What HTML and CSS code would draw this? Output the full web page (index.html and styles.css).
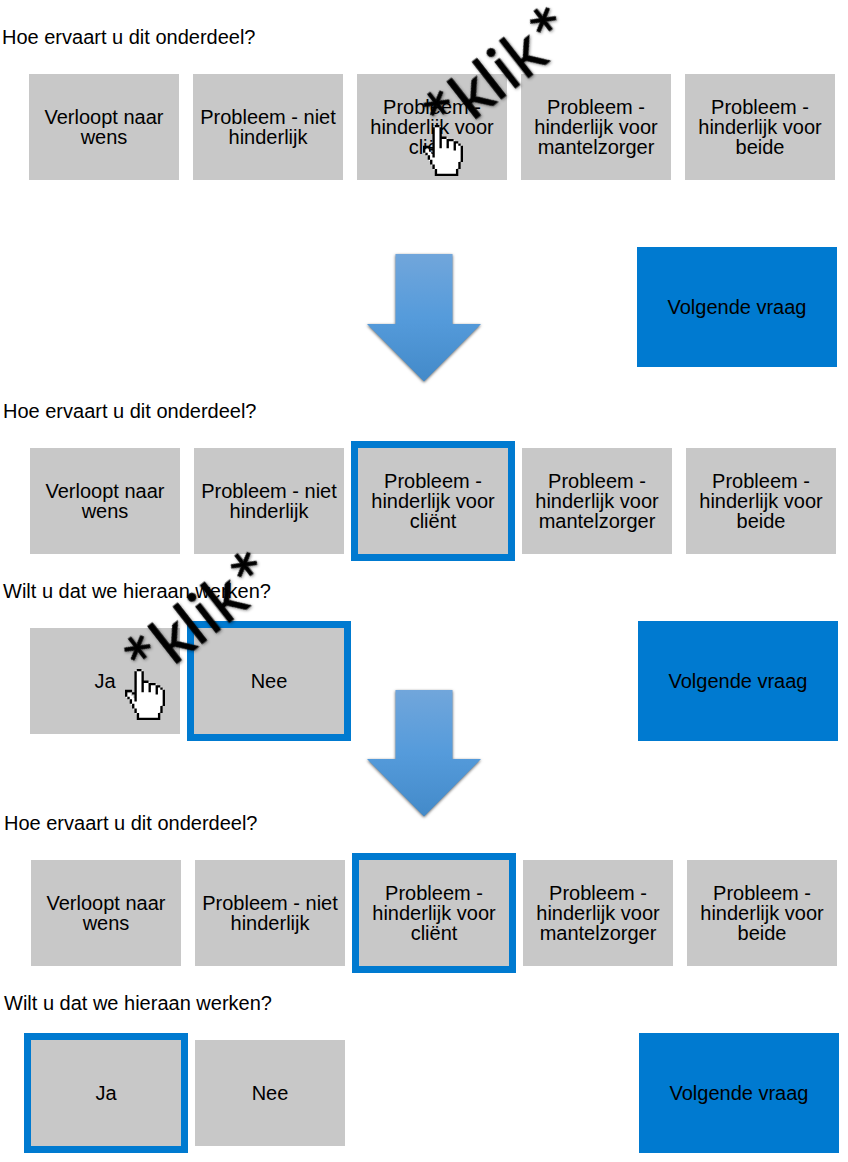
FILE: index.html
```html
<!DOCTYPE html>
<html lang="nl">
<head>
<meta charset="utf-8">
<title>Vragenlijst</title>
<link rel="stylesheet" href="styles.css">
</head>
<body>
<svg class="defs" width="0" height="0" aria-hidden="true">
  <defs>
    <linearGradient id="arrow-fill" x1="0" y1="0" x2="0" y2="1">
      <stop offset="0" stop-color="#71a6db"/>
      <stop offset="0.5" stop-color="#559bdb"/>
      <stop offset="1" stop-color="#438ac9"/>
    </linearGradient>
    <symbol id="hand" viewBox="0 0 17 22" preserveAspectRatio="none">
      <path fill="#fff" d="M4.500 0.500h3v5h3v1h3v1h2v1h1v7h-1v3h-1v3H5.500v-2h-1v-2h-1v-2h-1v-2h-1v-1h-1v-2h2v1h1v1h1z"/>
      <path fill="#000" d="M5 0h2v1H5zM4 1h1v13H4zM7 1h1v9H7zM8 5h2v1H8zM10 6h3v1h-3zM10 7h1v3h-1zM13 7h2v1h-2zM13 8h1v3h-1zM15 8h1v1h-1zM16 9h1v7h-1zM0 9h3v1H0zM0 10h1v2H0zM3 10h1v1H3zM1 12h1v1H1zM2 13h1v2H2zM3 15h1v2H3zM4 17h1v2H4zM5 19h1v3H5zM15 16h1v3h-1zM14 19h1v3h-1zM6 21h8v1H6z"/>
    </symbol>
  </defs>
</svg>
<main class="flow">
  <section class="step step-1">
    <h2 class="question">Hoe ervaart u dit onderdeel?</h2>
    <div class="options">
      <div class="option">Verloopt naar wens</div>
      <div class="option">Probleem - niet hinderlijk</div>
      <div class="option">Probleem - hinderlijk voor cliënt</div>
      <div class="option">Probleem - hinderlijk voor mantelzorger</div>
      <div class="option">Probleem - hinderlijk voor beide</div>
    </div>
    <div class="followup"></div>
    <div class="bottom">
      <div class="next">Volgende vraag</div>
    </div>
  </section>

  <section class="step step-2">
    <h2 class="question">Hoe ervaart u dit onderdeel?</h2>
    <div class="options">
      <div class="option">Verloopt naar wens</div>
      <div class="option">Probleem - niet hinderlijk</div>
      <div class="option selected">Probleem - hinderlijk voor cliënt</div>
      <div class="option">Probleem - hinderlijk voor mantelzorger</div>
      <div class="option">Probleem - hinderlijk voor beide</div>
    </div>
    <div class="followup"><h2 class="question">Wilt u dat we hieraan werken?</h2></div>
    <div class="bottom">
      <div class="option">Ja</div>
      <div class="option selected">Nee</div>
      <div class="next">Volgende vraag</div>
    </div>
  </section>

  <section class="step step-3">
    <h2 class="question">Hoe ervaart u dit onderdeel?</h2>
    <div class="options">
      <div class="option">Verloopt naar wens</div>
      <div class="option">Probleem - niet hinderlijk</div>
      <div class="option selected">Probleem - hinderlijk voor cliënt</div>
      <div class="option">Probleem - hinderlijk voor mantelzorger</div>
      <div class="option">Probleem - hinderlijk voor beide</div>
    </div>
    <div class="followup"><h2 class="question">Wilt u dat we hieraan werken?</h2></div>
    <div class="bottom">
      <div class="option selected">Ja</div>
      <div class="option">Nee</div>
      <div class="next">Volgende vraag</div>
    </div>
  </section>

  <svg class="overlay" width="848" height="1162" viewBox="0 0 848 1162">
    <g class="arrow">
      <path fill="url(#arrow-fill)" d="M395.500 254H452.500V324H481L424 381.500L367 324H395.500Z"/>
      <path fill="url(#arrow-fill)" d="M395.500 690H452.500V759H481L424 816.500L367 759H395.500Z"/>
    </g>
    <g class="klik">
      <text transform="translate(478.700 116.600) rotate(-38)"><tspan class="star" x="-41.500" y="9.500">*</tspan><tspan x="-8 24 41.500 58.400" y="0">klik</tspan><tspan class="star" x="93.800" y="9.500">*</tspan></text>
      <text transform="translate(179.500 661.300) rotate(-38)"><tspan class="star" x="-41.500" y="9.500">*</tspan><tspan x="-8 24 41.500 58.400" y="0">klik</tspan><tspan class="star" x="93.800" y="9.500">*</tspan></text>
    </g>
    <use href="#hand" x="423" y="125" width="40" height="51"/>
    <use href="#hand" x="125" y="669" width="40" height="51"/>
  </svg>
</main>
</body>
</html>
```

FILE: styles.css
```css
body {
  margin: 0;
  background: #fff;
  color: #000;
  font: 20px/20px "Liberation Sans", Arial, sans-serif;
}
.defs { display: block; }
.flow {
  position: relative;
  width: 848px;
  height: 1162px;
}
.step {
  box-sizing: border-box;
  padding-top: 27px;
}
.step-1 { height: 374px; padding-left: 2px; }
.step-2 { height: 412px; padding-left: 3px; }
.step-3 { height: 376px; padding-left: 4px; }
.question {
  margin: 0;
  font-size: 20px;
  font-weight: 400;
  line-height: 20px;
}
.options {
  display: flex;
  gap: 14px;
  margin: 27px 0 0 27px;
}
.option {
  display: flex;
  flex: none;
  align-items: center;
  justify-content: center;
  box-sizing: border-box;
  width: 150px;
  height: 106px;
  padding: 0 5px;
  background: #c8c8c8;
  text-align: center;
}
.selected { box-shadow: 0 0 0 7px #007ad0; }
.followup {
  box-sizing: border-box;
  height: 67px;
  padding-top: 27px;
}
.bottom {
  display: flex;
  align-items: center;
  gap: 14px;
  width: 808px;
  height: 120px;
  margin-left: 27px;
}
.next {
  display: flex;
  align-items: center;
  justify-content: center;
  width: 200px;
  height: 120px;
  margin-left: auto;
  background: #007ad0;
}
.overlay {
  position: absolute;
  top: 0;
  left: 0;
  overflow: visible;
}
.arrow { filter: drop-shadow(0 1.5px 1.8px rgba(0, 0, 0, 0.6)); }
.klik {
  font: 64px Lato, "Open Sans", sans-serif;
  stroke: #000;
  stroke-width: 0.8px;
  filter: drop-shadow(1.5px 1.5px 1.5px rgba(0, 0, 0, 0.45));
}
.star { font-size: 78px; }
```
